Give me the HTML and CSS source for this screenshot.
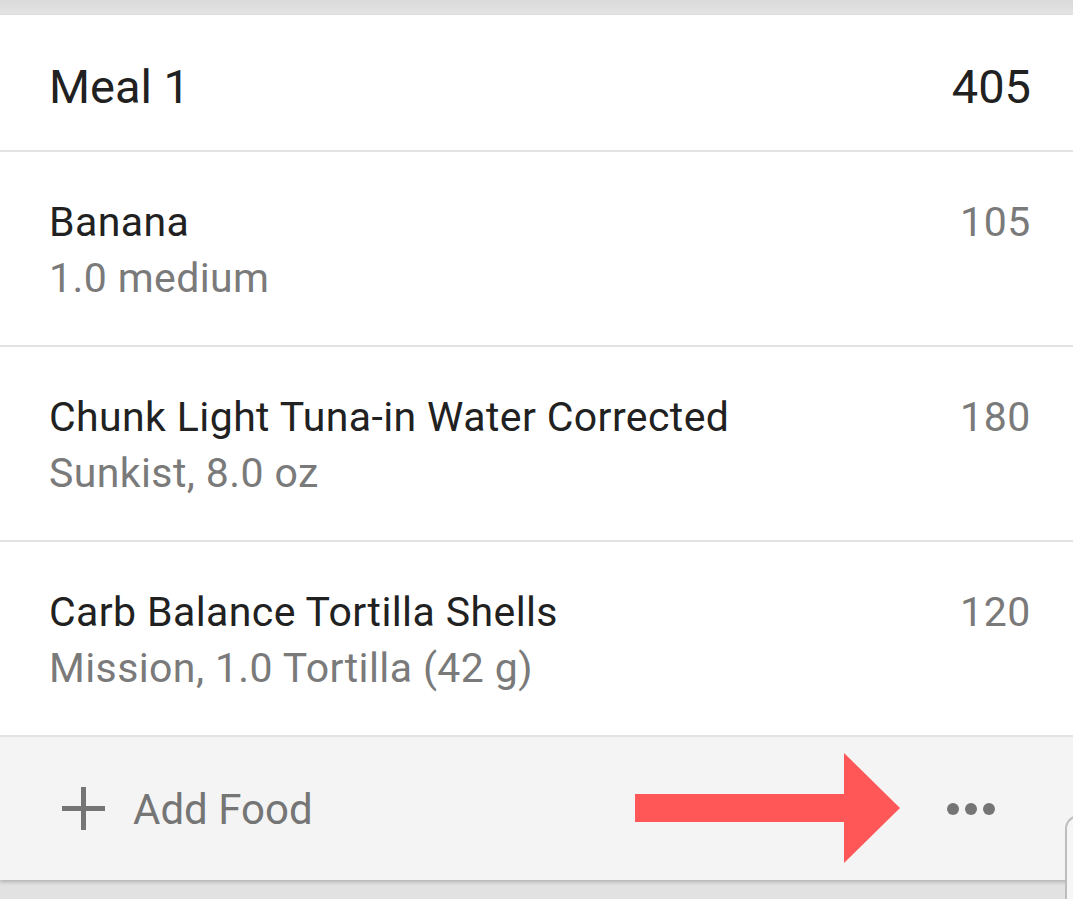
FILE: index.html
```html
<!DOCTYPE html>
<html>
<head>
<meta charset="utf-8">
<link rel="stylesheet" href="styles.css">
</head>
<body>
<div class="topband"></div>
<div class="card">
  <div class="meal-header">
    <span class="meal-title">Meal 1</span>
    <span class="meal-total">405</span>
  </div>
  <div class="entry">
    <div class="entry-text">
      <div class="entry-name">Banana</div>
      <div class="entry-sub">1.0 medium</div>
    </div>
    <div class="entry-cal">105</div>
  </div>
  <div class="entry">
    <div class="entry-text">
      <div class="entry-name">Chunk Light Tuna-in Water Corrected</div>
      <div class="entry-sub">Sunkist, 8.0 oz</div>
    </div>
    <div class="entry-cal">180</div>
  </div>
  <div class="entry">
    <div class="entry-text">
      <div class="entry-name">Carb Balance Tortilla Shells</div>
      <div class="entry-sub">Mission, 1.0 Tortilla (42 g)</div>
    </div>
    <div class="entry-cal">120</div>
  </div>
  <div class="footer">
    <div class="add-food">
      <svg class="plus" width="43" height="43" viewBox="0 0 43 43"><path d="M21.5 0V43M0 21.5H43" stroke="#757575" stroke-width="5" fill="none"/></svg>
      <span class="add-label">Add Food</span>
    </div>
    <div class="footer-right">
      <svg class="arrow" width="266" height="110" viewBox="0 0 266 110"><polygon points="0,41 209,41 209,0 265,55 209,110 209,69 0,69" fill="#ff5757"/></svg>
      <svg class="more" width="50" height="14" viewBox="0 0 50 14"><circle cx="7" cy="7" r="6" fill="#757575"/><circle cx="25" cy="7" r="6" fill="#757575"/><circle cx="43" cy="7" r="6" fill="#757575"/></svg>
    </div>
  </div>
</div>
<div class="edge-panel"></div>
</body>
</html>
```
FILE: styles.css
```css
html, body {
  margin: 0;
  padding: 0;
}
body {
  background: #e2e2e2;
  font-family: Roboto, "Noto Sans", sans-serif;
  width: 1073px;
  height: 899px;
  overflow: hidden;
  position: relative;
}
.topband {
  height: 15px;
  background: linear-gradient(#dadada, #e4e4e4);
}
.card {
  background: #fff;
  box-shadow: 0 2px 4px rgba(0,0,0,0.22);
}
.meal-header {
  display: flex;
  justify-content: space-between;
  align-items: baseline;
  padding: 43px 42px 35px 49px;
  font-size: 47px;
  line-height: 57px;
  color: #212121;
  border-bottom: 2px solid #e3e3e3;
}
.entry {
  display: flex;
  justify-content: space-between;
  align-items: flex-start;
  padding: 42px 42px 39px 49px;
  font-size: 41px;
  letter-spacing: 0.4px;
  line-height: 56px;
  border-bottom: 2px solid #e3e3e3;
}
.entry-name {
  color: #212121;
}
.entry-sub {
  color: #7a7a7a;
}
.entry-cal {
  color: #7a7a7a;
  letter-spacing: 0.6px;
}
.footer {
  display: flex;
  justify-content: space-between;
  align-items: center;
  height: 143px;
  background: #f4f4f4;
  padding: 0 77px 0 62px;
}
.add-food {
  display: flex;
  align-items: center;
  gap: 28px;
}
.plus {
  display: block;
}
.add-label {
  font-size: 42px;
  color: #757575;
  line-height: 50px;
  margin-top: 2px;
}
.footer-right {
  display: flex;
  align-items: center;
  gap: 45px;
}
.arrow, .more {
  display: block;
}
.arrow {
  margin-top: -2px;
}
.edge-panel {
  position: absolute;
  left: 1065px;
  top: 815px;
  width: 30px;
  height: 110px;
  border-left: 2px solid #bdbdbd;
  border-top: 2px solid #bdbdbd;
  border-top-left-radius: 14px;
  background: #f6f6f6;
}
```
